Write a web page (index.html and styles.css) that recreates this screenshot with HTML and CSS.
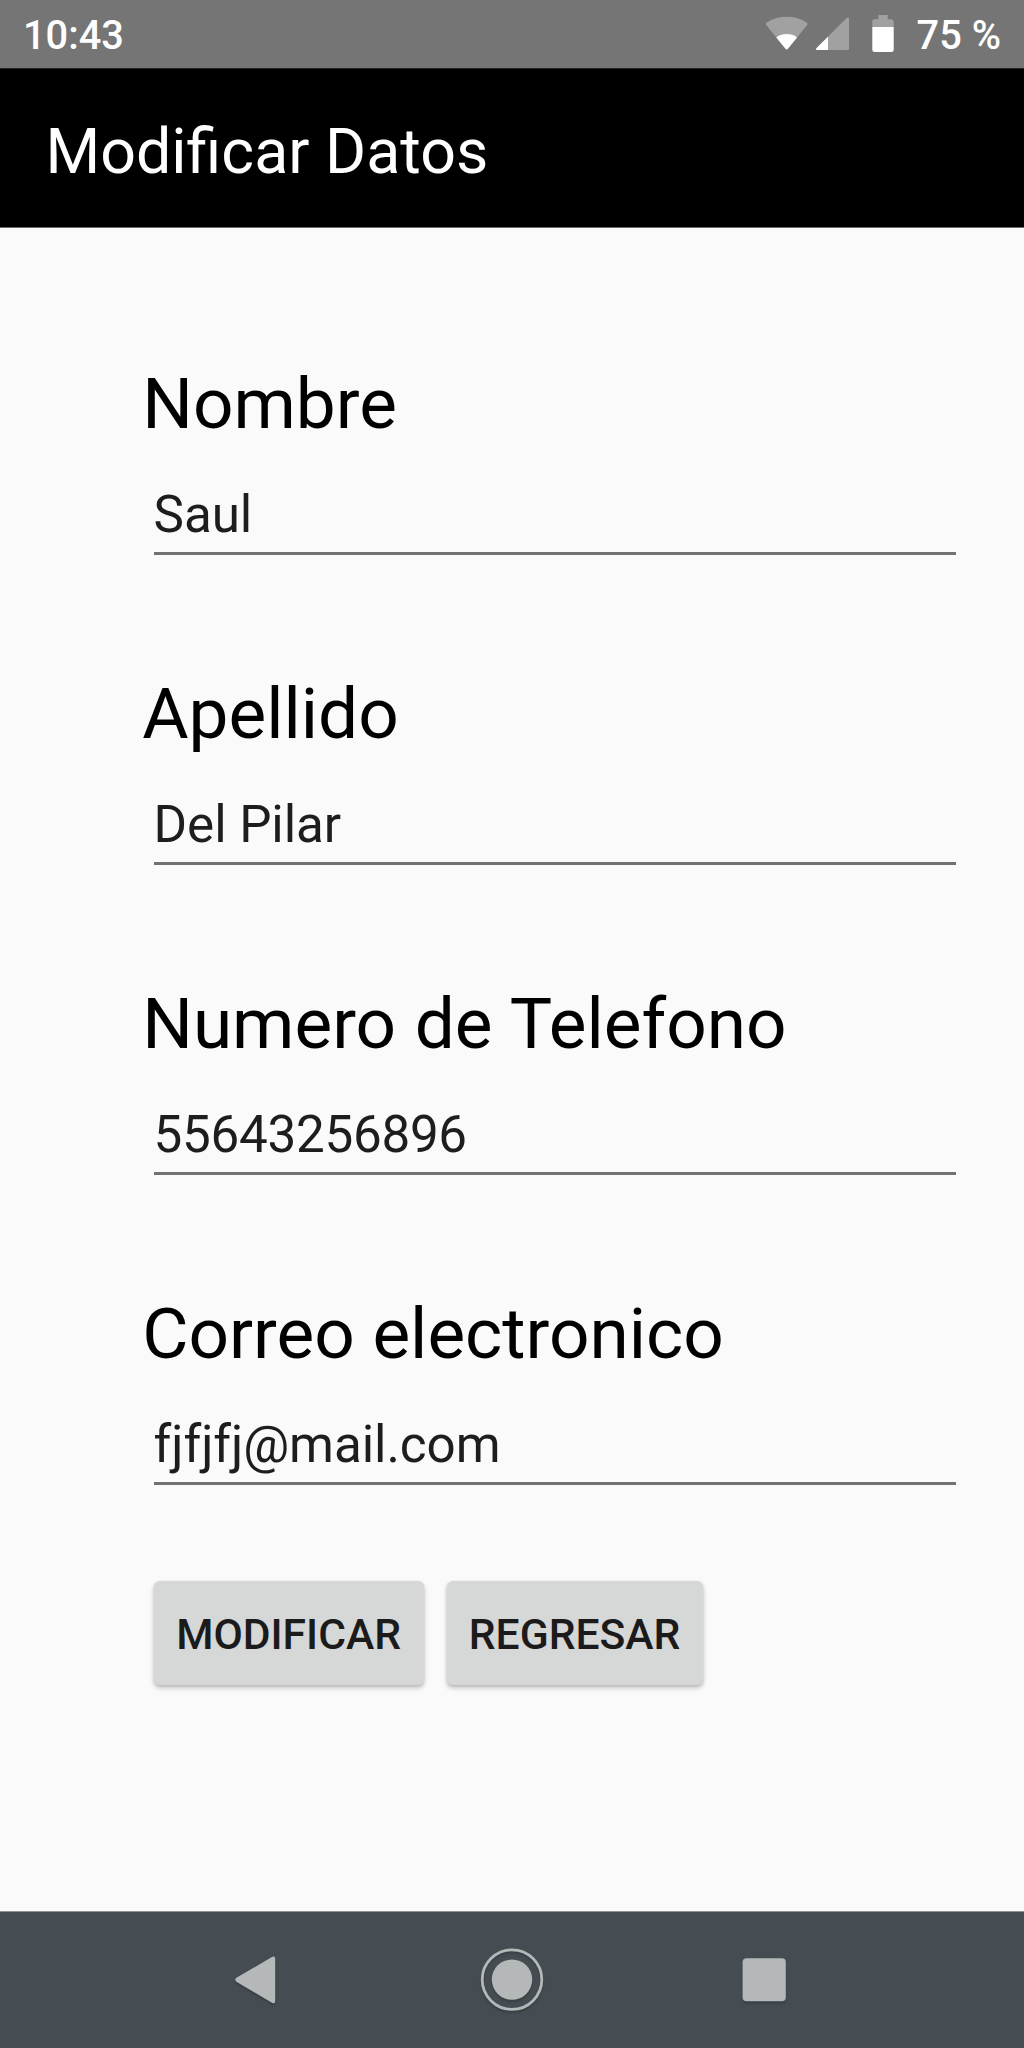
FILE: index.html
```html
<!DOCTYPE html>
<html lang="es">
<head>
<meta charset="utf-8">
<title>Modificar Datos</title>
<link rel="stylesheet" href="styles.css">
</head>
<body>
<div class="screen">
  <header class="status-bar">
    <span class="clock">10:43</span>
    <svg class="status-icons" width="156" height="40" viewBox="0 0 156 40" aria-hidden="true">
      <path fill="#a1a1a1" d="M1.6 10.6Q0 8.6 2.2 7.2A38 38 0 0 1 41.200 7.200Q43.400 8.600 41.800 10.600L22.900 33.800Q21.700 35.200 20.500 33.800Z"/>
      <path fill="#fff" d="M11.300 22.400A18 18 0 0 1 32.100 22.400L22.900 33.800Q21.700 35.200 20.500 33.800Z"/>
      <path fill="#a1a1a1" d="M81.200 3.500Q84 1.200 84 4.200V33.500Q84 35 82.500 35H52.500Q50 35 51.600 33Z"/>
      <path fill="#fff" d="M63 21.700V35H52.500Q50 35 51.600 33Z"/>
      <path fill="#a1a1a1" d="M107.300 12V6.500Q107.300 4.300 109.500 4.300H113.300V0H122.700V4.300H126.500Q128.700 4.300 128.700 6.500V12Z"/>
      <path fill="#fff" d="M107.300 12H128.700V34.800Q128.700 37 126.500 37H109.500Q107.300 37 107.300 34.800Z"/>
    </svg>
    <span class="battery-level">75 %</span>
  </header>
  <div class="app-bar"><h1 class="title">Modificar Datos</h1></div>
  <main class="form">
    <div class="field"><div class="label">Nombre</div><div class="input">Saul</div></div>
    <div class="field"><div class="label">Apellido</div><div class="input">Del Pilar</div></div>
    <div class="field"><div class="label phone">Numero de Telefono</div><div class="input digits">55643256896</div></div>
    <div class="field"><div class="label">Correo electronico</div><div class="input">fjfjfj@mail.com</div></div>
    <div class="actions">
      <button class="button modify" type="button">MODIFICAR</button>
      <button class="button back" type="button">REGRESAR</button>
    </div>
  </main>
  <nav class="nav-bar">
    <svg class="nav-icons" width="1024" height="136" viewBox="0 0 1024 136" aria-hidden="true">
      <g class="nav-shape">
        <path d="M271.500 45.300Q275.200 43.300 275.200 47V89Q275.200 92.700 271.500 90.400L236.800 70Q233.600 67.800 236.800 65.600Z"/>
        <circle cx="512" cy="67.600" r="20.200"/>
        <circle class="ring" cx="512" cy="67.600" r="29.800"/>
        <rect x="742.600" y="46.200" width="43.200" height="43" rx="4"/>
      </g>
    </svg>
  </nav>
</div>
</body>
</html>
```
FILE: styles.css
```css
body {
  margin: 0;
  font-family: Roboto, "Liberation Sans", sans-serif;
}

.screen {
  display: flex;
  flex-direction: column;
  width: 1024px;
  height: 2048px;
  background: #fafafa;
}

.status-bar {
  display: flex;
  align-items: flex-start;
  box-sizing: border-box;
  height: 68px;
  padding: 12px 23px 0 23px;
  background: #757575;
  color: #fff;
  font-size: 39.800px;
  font-weight: 500;
  line-height: 48px;
}

.status-icons {
  margin: 3px 0 0 auto;
}

.battery-level {
  margin-left: -4px;
}

.app-bar {
  box-sizing: border-box;
  height: 160px;
  padding: 46px 45.500px 0;
  border-top: 1px solid #242424;
  border-bottom: 1px solid #6b6b6b;
  background: #000;
}

.title {
  margin: 0;
  color: #fff;
  font-size: 62.700px;
  font-weight: 400;
  line-height: 74px;
}

.form {
  flex: 1;
  padding: 134px 68.300px 0 142.200px;
}

.field {
  height: 310px;
}

.label {
  color: #000;
  font-size: 71.100px;
  line-height: 84px;
}

.phone {
  word-spacing: 1px;
}

.input {
  margin: 39px 0 0 11.400px;
  padding-bottom: 7px;
  border-bottom: 3px solid #727272;
  color: #1d1d1d;
  font-size: 51.200px;
  letter-spacing: -.080px;
  line-height: 60px;
}

.digits {
  letter-spacing: -.290px;
}

.actions {
  display: flex;
  gap: 23px;
  margin: -20.600px 0 0 11.400px;
}

.button {
  height: 103.500px;
  padding: 2px 0 0;
  border: 0;
  border-radius: 5.700px;
  background: #d6d7d7;
  box-shadow: 0 3px 5px rgba(0, 0, 0, .22), 0 1px 3px rgba(0, 0, 0, .1);
  color: #1b1b1b;
  font: 500 42.600px/52px Roboto, "Liberation Sans", sans-serif;
}

.modify {
  width: 270px;
}

.back {
  width: 256px;
}

.nav-bar {
  box-sizing: border-box;
  height: 137px;
  border-top: 1px solid #8e9396;
  background: #454d53;
}

.nav-icons {
  display: block;
}

.nav-shape {
  fill: #b4b8b9;
  filter: drop-shadow(0 2px 1px rgba(0, 0, 0, .2));
}

.ring {
  fill: none;
  stroke: #b4b8b9;
  stroke-width: 2.800;
}
```
